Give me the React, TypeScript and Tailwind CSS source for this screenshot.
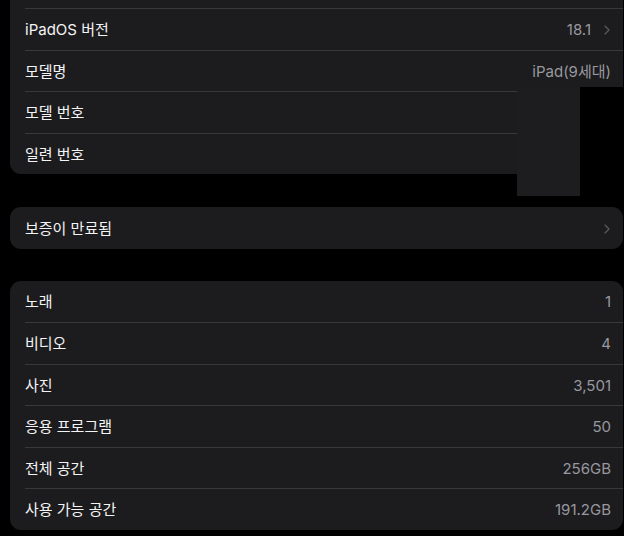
import { ChevronRight } from "lucide-react";

type Row = { label: string; value?: string; chevron?: boolean };

const deviceRows: Row[] = [
  { label: "" },
  { label: "iPadOS 버전", value: "18.1", chevron: true },
  { label: "모델명", value: "iPad(9세대)" },
  { label: "모델 번호" },
  { label: "일련 번호" },
];

const storageRows: Row[] = [
  { label: "노래", value: "1" },
  { label: "비디오", value: "4" },
  { label: "사진", value: "3,501" },
  { label: "응용 프로그램", value: "50" },
  { label: "전체 공간", value: "256GB" },
  { label: "사용 가능 공간", value: "191.2GB" },
];

function SettingsRow({ row, first }: { row: Row; first: boolean }) {
  return (
    <div className="pl-[15px]">
      <div
        className={`h-[41.5px] flex items-center justify-between pr-[12px] pt-[2px] ${
          first ? "" : "border-t border-[#38383a]"
        }`}
      >
        <span className="text-[15px] text-[#f4f4f4]">{row.label}</span>
        <div className="flex items-center gap-[8px]">
          {row.value && <span className="text-[15px] text-[#98989e]">{row.value}</span>}
          {row.chevron && (
            <ChevronRight className="h-[16px] w-[16px] -mr-[4px] text-[#5b5b60]" strokeWidth={1.75} />
          )}
        </div>
      </div>
    </div>
  );
}

function Card({ rows, className = "" }: { rows: Row[]; className?: string }) {
  return (
    <div className={`ml-[10px] bg-[#1c1c1e] rounded-[11px] overflow-hidden ${className}`}>
      {rows.map((row, i) => (
        <SettingsRow key={i} row={row} first={i === 0} />
      ))}
    </div>
  );
}

export default function App() {
  return (
    <div
      className="relative w-[624px] h-[536px] bg-black overflow-hidden pr-px"
      style={{ fontFamily: '"Inter", "Noto Sans CJK KR", sans-serif' }}
    >
      <Card rows={deviceRows} className="-mt-[33.5px]" />

      {/* redaction patches over the serial numbers */}
      <div className="absolute left-[580px] top-[87px] w-[44px] h-[88px] bg-black" />
      <div className="absolute left-[517px] top-[87px] w-[63px] h-[109px] bg-[#1d1d1f]" />

      <Card rows={[{ label: "보증이 만료됨", chevron: true }]} className="mt-[33px]" />

      <Card rows={storageRows} className="mt-[32px]" />
    </div>
  );
}
